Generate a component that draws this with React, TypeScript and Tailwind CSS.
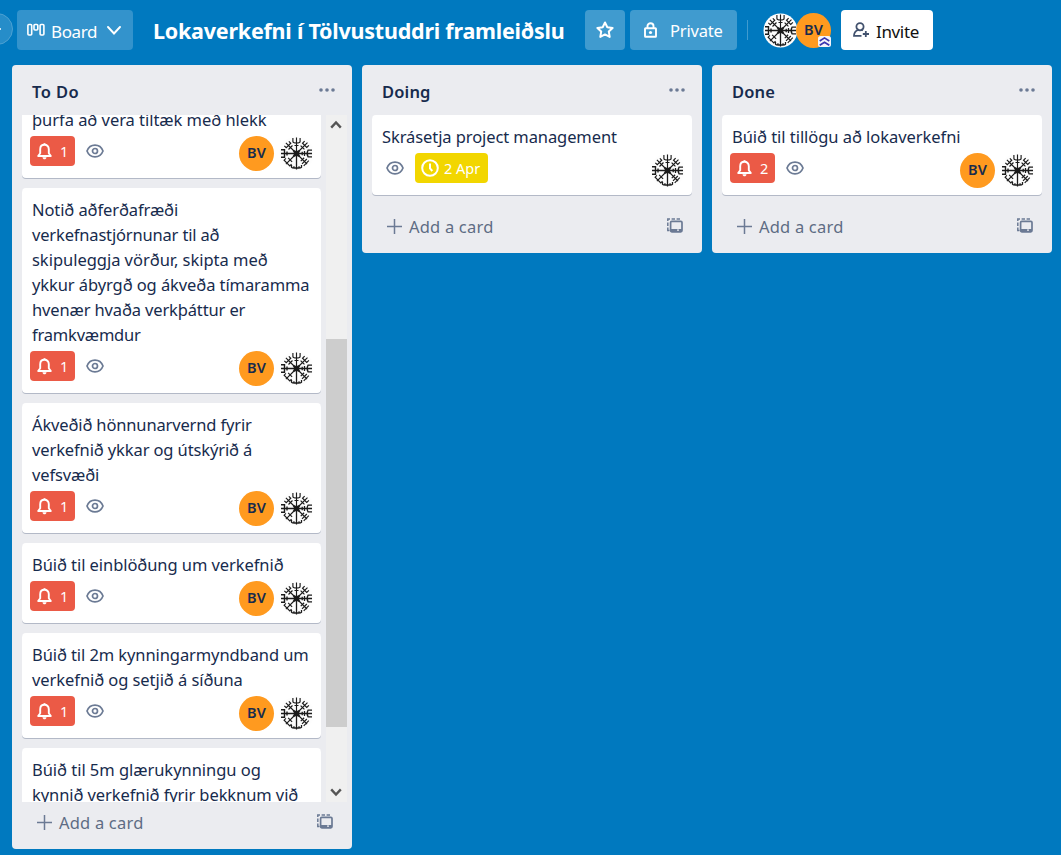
import React from "react";

type Line = { text: string; tracking?: string };

function Vegvisir({ className = "" }: { className?: string }) {
  return (
    <svg viewBox="-17.5 -17.5 35 35" className={`h-[35px] w-[35px] shrink-0 ${className}`} fill="none" stroke="#1b1b1b" strokeWidth="1.15">
      <circle r="17" fill="#fdfdfd" stroke="none" />
      <path d="M-3.2 -3.2L3.2 3.2M-3.2 3.2L3.2 -3.2" strokeWidth="1.8" />
      <circle r="2.2" strokeWidth="1.5" />
      <path d="M0 0V-16M-3.6 -15.5V-12Q-3.6 -10.5 0 -10.5Q3.6 -10.5 3.6 -12V-15.5M-2 -8H2" />
      <path d="M0 0V16M-5 11.5V13.7Q-2.5 15.5 -2.5 12.8M5 11.5V13.7Q2.5 15.5 2.5 12.8M-3 14.5H3" strokeWidth="1.3" />
      <path d="M0 0H-15.5M-15.5 -3.8H-12V3.8H-15.5M-9.5 -2V2" strokeWidth="1.4" />
      <path d="M0 0H15.5M15.5 -3.3H11.5Q9.7 0 11.5 3.3H15.5M8 -2.4V2.4M5.7 -1.7V1.7" strokeWidth="1.3" />
      <g transform="rotate(45)">
        <path d="M0 0V-15.5M-3 -14.5V-11.5H3V-14.5M-2.7 -8.5H2.7" />
        <path d="M0 0V15M-4 11V13.5H4V11M-2.8 9H2.8" />
        <path d="M0 0H-15M-14 -3.2H-11.3V3.2H-14M-8.5 -2.8V2.8" />
        <path d="M0 0H15M13.8 -3.6V3.6M11.2 -3.4V3.4M8.4 -2.4V2.4" />
      </g>
    </svg>
  );
}

function Initials() {
  return (
    <div className="flex h-[35px] w-[35px] shrink-0 items-center justify-center rounded-full bg-[#ff9a1f] pb-px text-[14.5px] font-semibold tracking-[0.1px] text-[#172b4d]">
      BV
    </div>
  );
}

function Bell() {
  return (
    <svg viewBox="0 0 15 17" className="h-[17px] w-[15px]" fill="none" stroke="#fff" strokeWidth="1.9" strokeLinejoin="round">
      <path d="M1.2 13H13.8L11.8 10.3V6.2C11.8 3.5 10 1.8 7.5 1.8S3.2 3.5 3.2 6.2V10.3Z" />
      <path d="M5.5 14.3C5.7 17 9.3 17 9.5 14.3Z" fill="#fff" stroke="none" />
      <path d="M7.5 0.2V2" />
    </svg>
  );
}

function Eye() {
  return (
    <svg viewBox="0 0 18 14" className="h-[14px] w-[18px]" fill="none" stroke="#6b7a94" strokeWidth="1.7">
      <path d="M1 7C2.4 3.3 5.3 1.1 9 1.1S15.6 3.3 17 7C15.6 10.7 12.7 12.9 9 12.9S2.4 10.7 1 7Z" />
      <circle cx="9" cy="7" r="2.5" />
    </svg>
  );
}

function Card({ lines, alerts, due, bv = true }: { lines: Line[]; alerts?: number; due?: string; bv?: boolean }) {
  return (
    <article className="shrink-0 rounded-[4px] bg-white pt-[9px] shadow-[0_1px_0_#b3b9c7]">
      <h3 className="px-[10px] text-[16.5px] leading-[25px] text-[#172b4d]">
        {lines.map((l) => (
          <span key={l.text} className={`block whitespace-nowrap ${l.tracking ?? ""}`}>{l.text}</span>
        ))}
      </h3>
      <div className="mt-[4px] flex h-[42px] items-start pr-[7px] pl-[8px]">
        {alerts !== undefined && (
          <div className="mr-[11px] flex h-[30px] w-[45px] items-center rounded-[4px] bg-[#eb5a46] pl-[7px] text-[14.5px] text-white">
            <Bell />
            <span className="ml-[8px] pt-px">{alerts}</span>
          </div>
        )}
        <div className={`flex h-[30px] items-center ${due ? "pl-[6px]" : ""}`}>
          <Eye />
        </div>
        {due && (
          <div className="ml-[11px] flex h-[30px] w-[73px] items-center rounded-[4px] bg-[#f2d600] pl-[6px] text-[14.5px] text-white">
            <svg viewBox="0 0 18 18" className="h-[18px] w-[18px]" fill="none" stroke="#fff" strokeWidth="2">
              <circle cx="9" cy="9" r="7.8" />
              <path d="M9 4.5V9.3L11.3 12" />
            </svg>
            <span className="ml-[5px] pt-px whitespace-nowrap">{due}</span>
          </div>
        )}
        <div className="ml-auto flex gap-[5px]">
          {bv && <Initials />}
          <Vegvisir />
        </div>
      </div>
    </article>
  );
}

function ListHeader({ title, tracking = "" }: { title: string; tracking?: string }) {
  return (
    <header className="flex h-[50px] shrink-0 items-center justify-between pr-[17px] pl-[20px]">
      <h2 className={`pt-[4px] text-[16.5px] font-semibold text-[#172b4d] ${tracking}`}>{title}</h2>
      <svg viewBox="0 0 16 4" className="h-[4px] w-[16px]" fill="#6b7a94">
        <circle cx="2" cy="2" r="1.8" />
        <circle cx="8" cy="2" r="1.8" />
        <circle cx="14" cy="2" r="1.8" />
      </svg>
    </header>
  );
}

function AddCard({ className = "h-[42px]" }: { className?: string }) {
  return (
    <footer className={`flex shrink-0 items-center pr-[19px] pl-[25px] ${className}`}>
      <svg viewBox="0 0 15 15" className="h-[15px] w-[15px]" stroke="#6b7a94" strokeWidth="1.5">
        <path d="M7.5 0V15M0 7.5H15" />
      </svg>
      <span className="ml-[7px] pt-px text-[16.5px] leading-[22px] tracking-[0.2px] text-[#5e6c84]">Add a card</span>
      <svg viewBox="0 0 16 15" className="mb-[2px] ml-auto h-[15px] w-[16px]" fill="none" stroke="#6b7a94" strokeWidth="1.7">
        <rect x="3.6" y="3.3" width="11.4" height="10.5" rx="1.2" />
        <path d="M4 11H15V13.3H4Z" fill="#6b7a94" stroke="none" />
        <path d="M10 12.2H12" stroke="#ebecf0" strokeWidth="1.2" />
        <path d="M0.8 3V0.9H3M4.6 0.9H8M9.6 0.9H13M0.8 4.6V8M0.8 9.6V12.5H2.5" strokeWidth="1.5" />
      </svg>
    </footer>
  );
}

const todo: { lines: Line[] }[] = [
  { lines: [{ text: "þurfa að vera tiltæk með hlekk", tracking: "tracking-[-0.04px]" }] },
  {
    lines: [
      { text: "Notið aðferðafræði", tracking: "tracking-[-0.1px]" },
      { text: "verkefnastjórnunar til að", tracking: "tracking-[-0.17px]" },
      { text: "skipuleggja vörður, skipta með", tracking: "tracking-[-0.03px]" },
      { text: "ykkur ábyrgð og ákveða tímaramma", tracking: "tracking-[-0.09px]" },
      { text: "hvenær hvaða verkþáttur er", tracking: "tracking-[-0.14px]" },
      { text: "framkvæmdur", tracking: "tracking-[-0.2px]" },
    ],
  },
  {
    lines: [
      { text: "Ákveðið hönnunarvernd fyrir", tracking: "tracking-[-0.15px]" },
      { text: "verkefnið ykkar og útskýrið á", tracking: "tracking-[-0.12px]" },
      { text: "vefsvæði", tracking: "tracking-[-0.12px]" },
    ],
  },
  { lines: [{ text: "Búið til einblöðung um verkefnið", tracking: "tracking-[-0.07px]" }] },
  {
    lines: [
      { text: "Búið til 2m kynningarmyndband um", tracking: "tracking-[-0.09px]" },
      { text: "verkefnið og setjið á síðuna", tracking: "tracking-[-0.07px]" },
    ],
  },
  {
    lines: [
      { text: "Búið til 5m glærukynningu og", tracking: "tracking-[-0.04px]" },
      { text: "kynnið verkefnið fyrir bekknum við", tracking: "tracking-[-0.09px]" },
    ],
  },
];

export default function App() {
  return (
    <div className="flex h-[855px] w-[1061px] flex-col overflow-hidden bg-[#0079bf] font-['Noto_Sans',sans-serif]">
      <nav className="flex h-[65px] shrink-0 items-start pt-[10px] text-white">
        <div className="-ml-[19px] mt-[3px] flex h-[32px] w-[32px] items-center rounded-full border border-[#4ca1d2] bg-[#268dc9] pl-[16px]">
          <span className="h-[2px] w-[3px] rounded-r-full bg-white" />
        </div>
        <button className="ml-[4px] flex h-[40px] w-[116px] items-center rounded-[4px] bg-[#3393cc] pl-[10px]">
          <svg viewBox="0 0 18 14" className="h-[14px] w-[18px]" fill="none" stroke="#fff" strokeWidth="1.6">
            <rect x="0.9" y="1.5" width="3.8" height="10.5" rx="1" />
            <rect x="7" y="1.5" width="3.8" height="5.5" rx="1" />
            <rect x="13.1" y="1.5" width="3.8" height="10.5" rx="1" />
          </svg>
          <span className="ml-[6px] pt-[3px] text-[17px] tracking-[-0.4px]">Board</span>
          <svg viewBox="0 0 14 9" className="mr-[12px] ml-auto h-[9px] w-[14px]" fill="none" stroke="#fff" strokeWidth="1.9">
            <path d="M1 1L7 7.5L13 1" strokeLinecap="round" />
          </svg>
        </button>
        <h1 className="ml-[20px] w-[432px] pt-[3px] text-[21.5px] leading-[36px] font-bold tracking-[-0.23px] whitespace-nowrap">Lokaverkefni í Tölvustuddri framleiðslu</h1>
        <button className="flex h-[40px] w-[40px] items-center justify-center rounded-[4px] bg-[#409bcf]">
          <svg viewBox="0 0 18 18" className="h-[18px] w-[18px]" fill="none" stroke="#fff" strokeWidth="2" strokeLinejoin="round">
            <path d="M9 1.5L11.3 6.2L16.6 7L12.8 10.6L13.7 15.9L9 13.4L4.3 15.9L5.2 10.6L1.4 7L6.7 6.2Z" />
          </svg>
        </button>
        <button className="ml-[5px] flex h-[40px] w-[107px] items-center rounded-[4px] bg-[#409bcf] pl-[14px]">
          <svg viewBox="0 0 13 16" className="h-[16px] w-[13px]" fill="none" stroke="#fff" strokeWidth="1.9">
            <rect x="1" y="6.2" width="11" height="8.6" rx="0.6" />
            <path d="M3.5 6V4C3.5 0.3 9.5 0.3 9.5 4V6" />
            <circle cx="6.5" cy="10.5" r="1.6" fill="#fff" stroke="none" />
          </svg>
          <span className="ml-[13px] pt-[3px] text-[16.5px] tracking-[-0.2px]">Private</span>
        </button>
        <div className="mt-[10px] ml-[10px] h-[20px] w-px bg-[#409bcf]" />
        <div className="relative mt-[3px] ml-[15px] flex">
          <Vegvisir />
          <div className="-ml-[2px]">
            <Initials />
          </div>
          <svg viewBox="0 0 13 11" className="absolute right-0 bottom-[1px] h-[11px] w-[13px]" fill="none" stroke="#3a35b0" strokeWidth="1.7">
            <rect width="13" height="11" rx="2.5" fill="#f4f4fa" stroke="none" />
            <path d="M1.7 5L6.5 1.9L11.3 5M1.7 9.3L6.5 6.2L11.3 9.3" />
          </svg>
        </div>
        <button className="ml-[10px] flex h-[40px] w-[92px] items-center rounded-[4px] bg-white pl-[12px] text-[17px] text-[#111]">
          <svg viewBox="0 0 17 16" className="h-[16px] w-[17px]" fill="none" stroke="#42526e" strokeWidth="1.8">
            <circle cx="7" cy="4.7" r="3.6" />
            <path d="M5 8C2.4 9 1 11 1 13.9H8.5M9.3 8L10 8.3M12.8 9V15M9.8 12H16" />
          </svg>
          <span className="ml-[6px] pt-[3px] tracking-[-0.35px]">Invite</span>
        </button>
      </nav>

      <main className="flex items-start gap-[10px] pl-[12px]">
        <section className="flex h-[784px] w-[340px] shrink-0 flex-col rounded-[4px] bg-[#ebecf0]">
          <ListHeader title="To Do" tracking="tracking-[0.4px]" />
          <div className="flex h-[687px] shrink-0 justify-between pr-[5px] pl-[10px]">
            <div className="h-[687px] w-[299px] overflow-hidden">
              <div className="-mt-[17px] flex flex-col gap-[10px]">
                {todo.map((c) => (
                  <Card key={c.lines[0].text} lines={c.lines} alerts={1} />
                ))}
              </div>
            </div>
            <div className="flex w-[21px] flex-col items-center bg-[#f0f0f0] pr-px">
              <svg viewBox="0 0 12 9" className="mt-[5px] h-[9px] w-[12px]" fill="none" stroke="#555" strokeWidth="2.4">
                <path d="M1.2 7.6L6 2.4L10.8 7.6" />
              </svg>
              <div className="mt-[210px] -mr-px h-[388px] w-[21px] bg-[#cdcdcd]" />
              <svg viewBox="0 0 12 9" className="mt-auto mb-[5px] h-[9px] w-[12px]" fill="none" stroke="#555" strokeWidth="2.4">
                <path d="M1.2 1.4L6 6.6L10.8 1.4" />
              </svg>
            </div>
          </div>
          <AddCard className="h-[41px]" />
        </section>

        <section className="flex h-[188px] w-[340px] shrink-0 flex-col rounded-[4px] bg-[#ebecf0]">
          <ListHeader title="Doing" tracking="tracking-[0.15px]" />
          <div className="mb-[10px] px-[10px]">
            <Card lines={[{ text: "Skrásetja project management", tracking: "tracking-[-0.09px]" }]} due="2 Apr" bv={false} />
          </div>
          <AddCard />
        </section>

        <section className="flex h-[188px] w-[340px] shrink-0 flex-col rounded-[4px] bg-[#ebecf0]">
          <ListHeader title="Done" tracking="tracking-[0.15px]" />
          <div className="mb-[10px] px-[10px]">
            <Card lines={[{ text: "Búið til tillögu að lokaverkefni", tracking: "tracking-[-0.05px]" }]} alerts={2} />
          </div>
          <AddCard />
        </section>
      </main>
    </div>
  );
}
